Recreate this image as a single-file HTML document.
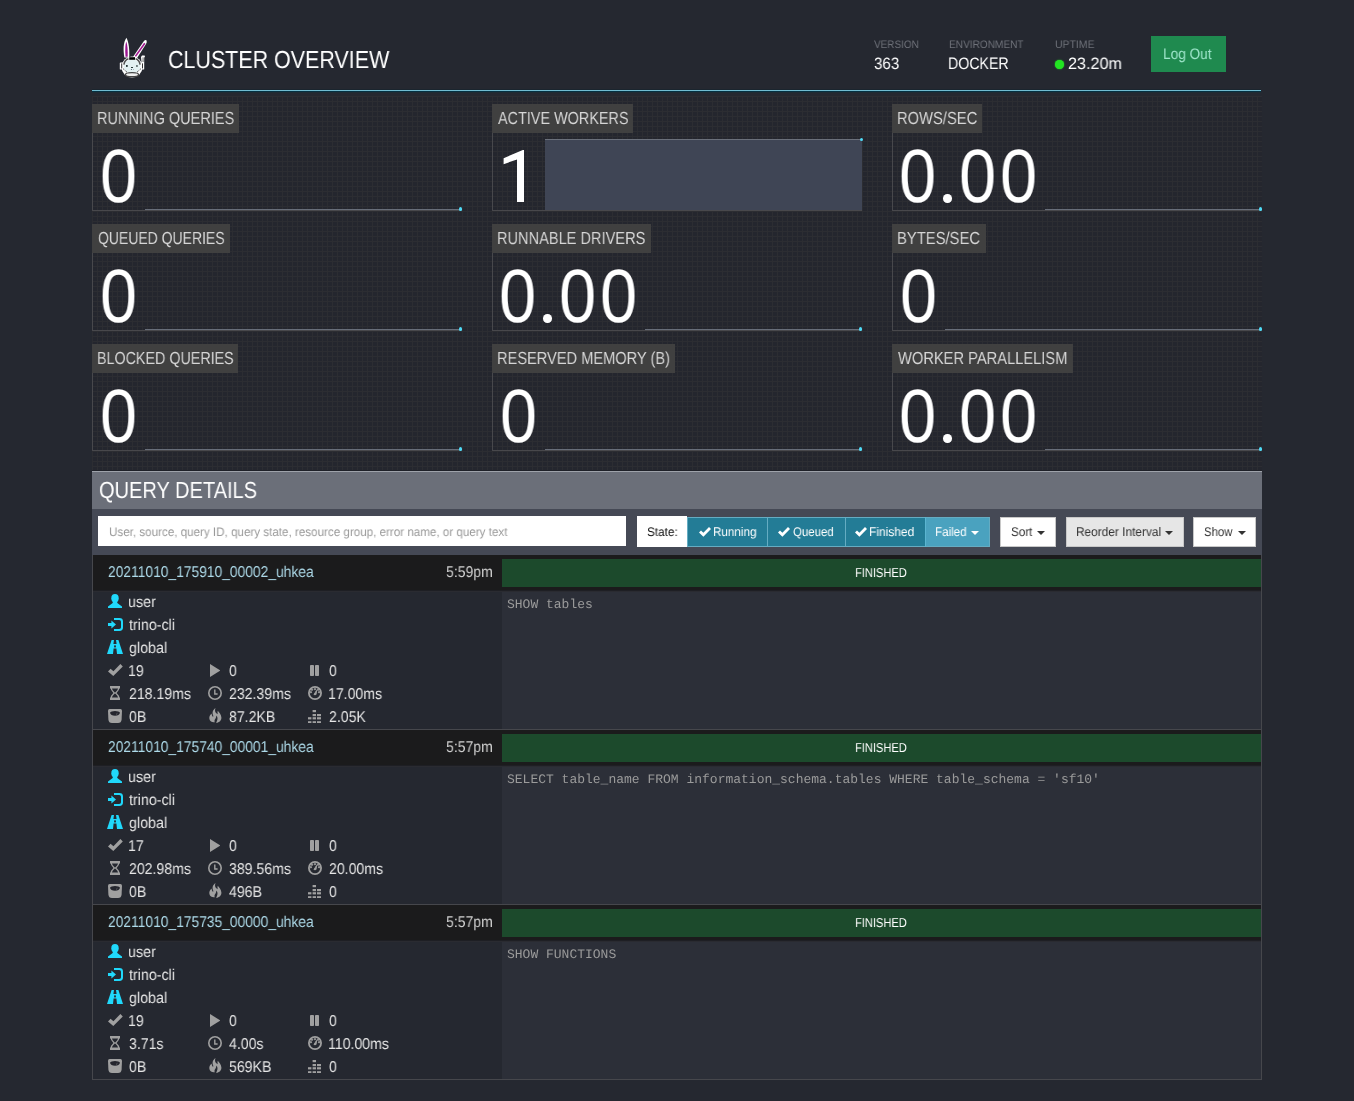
<!DOCTYPE html>
<html><head><meta charset="utf-8">
<style>
*{box-sizing:border-box;margin:0;padding:0}
html,body{width:1354px;height:1101px;overflow:hidden;background:#252830;font-family:"Liberation Sans",sans-serif;color:#fff}
.a{position:absolute}
.t{position:absolute;white-space:nowrap;transform-origin:0 0;will-change:transform;text-rendering:geometricPrecision}
</style></head><body>
<svg width="0" height="0" style="position:absolute"><defs>
<symbol id="i-user" viewBox="0 0 14 14"><ellipse cx="7" cy="4.2" rx="3.7" ry="4.2"/><path d="M5 8 H9 L9.6 9.2 L14 12.4 V14 H0 V12.4 L4.4 9.2 Z"/></symbol>
<symbol id="i-login" viewBox="0 0 15 13"><path d="M0 4.9 H3.4 V2.6 L8 6.5 L3.4 10.4 V8.1 H0 Z"/><path d="M6 0 H11.4 Q15 0 15 3.4 V9.6 Q15 13 11.4 13 H6 V11 H11.2 Q13 11 13 9.2 V3.8 Q13 2 11.2 2 H6 Z"/></symbol>
<symbol id="i-road" viewBox="0 0 16 14"><path d="M4.6 0 H7 L6.4 4 H9.6 L9 0 H11.4 L16 14 H10 L9.4 8.4 H6.6 L6 14 H0 Z"/><rect x="7.1" y="5.4" width="1.8" height="2" fill="#252830"/></symbol>
<symbol id="i-ok" viewBox="0 0 15 12"><path d="M0 7.4 L2.6 4.8 L5.4 7.2 L12.4 0 L14.8 2.4 L5.3 11.9 Z"/></symbol>
<symbol id="i-hour" viewBox="0 0 10 14"><rect x="0" y="0" width="10" height="2"/><rect x="0" y="12" width="10" height="2"/><path d="M1.3 2 C1.4 5 3.6 6 4.4 7 C3.6 8 1.4 9 1.3 12" fill="none" stroke-width="1.3"/><path d="M8.7 2 C8.6 5 6.4 6 5.6 7 C6.4 8 8.6 9 8.7 12" fill="none" stroke-width="1.3"/></symbol>
<symbol id="i-scale" viewBox="0 0 14 14"><path d="M1.6 0 H12.4 Q14 0 14 1.8 L13.6 10.5 Q13.3 14 10 14 H4 Q0.7 14 0.4 10.5 L0 1.8 Q0 0 1.6 0 Z"/><path d="M2 3.8 Q3 2 7 2 Q11 2 12 3.8 Q11.4 6.8 7 6.8 Q2.6 6.8 2 3.8 Z" fill="#23252d"/><path d="M8.3 5.6 L9.3 3.6 L9 5.6 Z" fill="#a0a0a0"/></symbol>
<symbol id="i-play" viewBox="0 0 10.4 13"><path d="M0 0 L10.4 6.5 L0 13 Z"/></symbol>
<symbol id="i-clock" viewBox="0 0 14 14"><circle cx="7" cy="7" r="6.2" fill="none" stroke-width="1.6"/><path d="M6.8 3.4 V8 H9.6" fill="none" stroke-width="1.4"/></symbol>
<symbol id="i-fire" viewBox="0 0 13 15"><path d="M6.6 0 C3.5 2 3 5 4.2 7.6 C4.6 8.4 4.2 9 3.6 8.4 C2.9 7.6 2.6 6.4 2.6 5.6 C0.8 7.2 0 9 0.4 11 C1 13.6 3.4 14.6 5.8 14.2 C5.4 13.2 5.4 12 6.2 11 C7 10 7.4 9 7.2 7.6 C8.6 8.8 8.8 10.6 8.2 12.2 C7.8 13.2 7.4 14 7.2 15 C10.4 14.4 12.6 12.2 12.4 9.4 C12.2 6.6 10.4 4.6 8.8 2.8 C8.4 4.2 8.4 5.4 9 6.2 C7.8 6 6.6 5 6.2 3.6 C5.9 2.4 6.1 1 6.6 0 Z"/></symbol>
<symbol id="i-pause" viewBox="0 0 9 11"><rect x="0" y="0" width="4" height="11" rx="0.8"/><rect x="5" y="0" width="4" height="11" rx="0.8"/></symbol>
<symbol id="i-dash" viewBox="0 0 14 14"><circle cx="7" cy="7" r="6.1" fill="none" stroke-width="1.8"/><circle cx="4" cy="3.7" r=".7"/><circle cx="7" cy="3.2" r=".7"/><circle cx="10" cy="3.7" r=".7"/><circle cx="2.9" cy="6.2" r=".7"/><circle cx="11.1" cy="6.2" r=".7"/><path d="M6 8.6 L8.6 4.4 L8 8.6 Z"/></symbol>
<symbol id="i-eq" viewBox="0 0 13 13.4"><rect x="4.6" y="0" width="3.4" height="2.2"/><rect x="4.6" y="4" width="3.4" height="2.2"/><rect x="9" y="4" width="4" height="2.2"/><rect x="0" y="7.2" width="3.4" height="2.2"/><rect x="4.6" y="7.2" width="3.4" height="2.2"/><rect x="9" y="7.2" width="4" height="2.2"/><rect x="0" y="11.2" width="3.4" height="2.2"/><rect x="4.6" y="11.2" width="3.4" height="2.2"/><rect x="9" y="11.2" width="4" height="2.2"/></symbol>
<symbol id="i-check" viewBox="0 0 12 10"><path d="M0 5.6 L2 3.6 L4.4 5.8 L10 0 L12 2 L4.4 9.8 Z"/></symbol>
</defs></svg>
<div class="a" style="left:92px;top:89px;width:1169px;height:1px;background:#1b252e;"></div>
<div class="a" style="left:92px;top:90px;width:1169px;height:1px;background:#70bcd1;"></div>
<div class="a" style="left:92px;top:91px;width:1169px;height:1px;background:#053041;"></div>
<div class="a" style="left:92px;top:92px;width:1169px;height:1px;background:#1f2b34;"></div>
<svg class="a" style="left:116px;top:36px" width="34" height="44" viewBox="116 36 34 44">
<path d="M124.4 57.5 C123 50 123.2 42.5 126.4 37.8 C128.8 42 129.6 50 129.2 57.5 Z" fill="#fff"/>
<path d="M125.5 56.8 C125 50 125.2 45 126.3 41.6 C127.4 45 127.9 50 127.7 56.8 Z" fill="#9b1490"/>
<path d="M132.6 57.4 L143.6 41.4 Q145.4 39.4 146.6 40.4 Q147.2 42 146 44 L136.8 58.4 Z" fill="#fff"/>
<path d="M135.4 56.4 L144.8 43.2" stroke="#a2168f" stroke-width="1.6" fill="none"/>
<rect x="119.8" y="62.4" width="3.8" height="7.2" rx=".6" fill="#fff"/>
<rect x="140.4" y="62.4" width="3.8" height="7.2" rx=".6" fill="#fff"/>
<path d="M141 57 L142 55.6 H144.6 L145 56.6 L144.2 57.8 V63 H141.6 Z" fill="#fff"/>
<circle cx="132" cy="67" r="10.5" fill="#fff"/>
<ellipse cx="132" cy="66.3" rx="8.4" ry="6.9" fill="#e3f1f2"/>
<path d="M123.9 64.6 Q124.4 60.4 128.4 58.8" stroke="#505050" stroke-width="1.5" fill="none"/>
<path d="M140.1 64.6 Q139.6 60.4 135.6 58.8" stroke="#505050" stroke-width="1.5" fill="none"/>
<rect x="129.2" y="57.2" width="5.8" height="2.6" fill="#000"/>
<rect x="121.2" y="63.4" width="1" height="5" fill="#333"/>
<rect x="142" y="63.4" width="1" height="5" fill="#333"/>
<rect x="142.6" y="57.4" width="0.9" height="4.6" fill="#555"/>
<path d="M123.2 68.8 L127.2 72.4" stroke="#333" stroke-width="1" stroke-dasharray="1.1 0.9" fill="none"/>
<path d="M140.8 68.8 L136.8 72.4" stroke="#333" stroke-width="1" stroke-dasharray="1.1 0.9" fill="none"/>
<ellipse cx="132" cy="74.7" rx="6.6" ry="2" fill="#f0f0f0" stroke="#444" stroke-width="1.3"/>
<rect x="126" y="65.1" width="1.7" height="1.7" fill="#122"/>
<rect x="136.4" y="65.1" width="1.1" height="1.8" fill="#122"/>
<rect x="131" y="67" width="2" height="0.9" fill="#122"/>
<circle cx="131.4" cy="69.4" r=".5" fill="#345"/><circle cx="133.5" cy="69.4" r=".45" fill="#567"/>
</svg>
<div class="a" style="left:1151px;top:36px;width:75px;height:36px;background:#1f8a4f;"></div>
<div class="a" style="left:1055px;top:60px;width:9px;height:9px;border-radius:50%;background:#22e422;box-shadow:0 0 1.5px #2f2"></div>
<div class="a" style="left:92px;top:96px;width:1170px;height:374px;background-color:#24262e;background-image:linear-gradient(to right,#2c2d32 1px,transparent 1px),linear-gradient(to bottom,#2c2d32 1px,transparent 1px);background-size:5px 5px;background-position:0 0"></div>
<div class="a" style="left:92px;top:470px;width:1170px;height:1px;background:#1e2027;"></div>
<div class="a" style="left:92px;top:104px;width:147px;height:29px;background:#404040;"></div>
<div class="a" style="left:92px;top:133px;width:1px;height:78px;background:#48484c;"></div>
<div class="a" style="left:92px;top:210px;width:370px;height:1px;background:#48484c;"></div>
<div class="a" style="left:145px;top:209px;width:316px;height:1px;background:#686e7a;"></div>
<div class="a" style="left:458.9px;top:207.4px;width:3.4px;height:3.4px;border-radius:50%;background:#4fdcf8"></div>
<div class="a" style="left:492px;top:104px;width:141px;height:29px;background:#404040;"></div>
<div class="a" style="left:492px;top:133px;width:1px;height:78px;background:#48484c;"></div>
<div class="a" style="left:492px;top:210px;width:370px;height:1px;background:#48484c;"></div>
<svg class="a" style="left:492px;top:104px" width="40" height="100"><path d="M32 46 L32 98 L25 98 L25 55.4 L11.6 60.2 L11.6 54.2 L30.8 46 Z" fill="#fff"/></svg>
<div class="a" style="left:545px;top:139px;width:317px;height:71px;background:#3f4555;border-top:1px solid #6b707b"></div>
<div class="a" style="left:859.5px;top:137.5px;width:3.4px;height:3.4px;border-radius:50%;background:#4fdcf8"></div>
<div class="a" style="left:892px;top:104px;width:90px;height:29px;background:#404040;"></div>
<div class="a" style="left:892px;top:133px;width:1px;height:78px;background:#48484c;"></div>
<div class="a" style="left:892px;top:210px;width:370px;height:1px;background:#48484c;"></div>
<div class="a" style="left:943.2px;top:194.2px;width:8.6px;height:8.6px;border-radius:50%;background:#fff"></div>
<div class="a" style="left:1045px;top:209px;width:216px;height:1px;background:#686e7a;"></div>
<div class="a" style="left:1258.9px;top:207.4px;width:3.4px;height:3.4px;border-radius:50%;background:#4fdcf8"></div>
<div class="a" style="left:92px;top:224px;width:138px;height:29px;background:#404040;"></div>
<div class="a" style="left:92px;top:253px;width:1px;height:78px;background:#48484c;"></div>
<div class="a" style="left:92px;top:330px;width:370px;height:1px;background:#48484c;"></div>
<div class="a" style="left:145px;top:329px;width:316px;height:1px;background:#686e7a;"></div>
<div class="a" style="left:458.9px;top:327.4px;width:3.4px;height:3.4px;border-radius:50%;background:#4fdcf8"></div>
<div class="a" style="left:492px;top:224px;width:159px;height:29px;background:#404040;"></div>
<div class="a" style="left:492px;top:253px;width:1px;height:78px;background:#48484c;"></div>
<div class="a" style="left:492px;top:330px;width:370px;height:1px;background:#48484c;"></div>
<div class="a" style="left:543.2px;top:314.2px;width:8.6px;height:8.6px;border-radius:50%;background:#fff"></div>
<div class="a" style="left:645px;top:329px;width:216px;height:1px;background:#686e7a;"></div>
<div class="a" style="left:858.9px;top:327.4px;width:3.4px;height:3.4px;border-radius:50%;background:#4fdcf8"></div>
<div class="a" style="left:892px;top:224px;width:94px;height:29px;background:#404040;"></div>
<div class="a" style="left:892px;top:253px;width:1px;height:78px;background:#48484c;"></div>
<div class="a" style="left:892px;top:330px;width:370px;height:1px;background:#48484c;"></div>
<div class="a" style="left:945px;top:329px;width:316px;height:1px;background:#686e7a;"></div>
<div class="a" style="left:1258.9px;top:327.4px;width:3.4px;height:3.4px;border-radius:50%;background:#4fdcf8"></div>
<div class="a" style="left:92px;top:344px;width:146px;height:29px;background:#404040;"></div>
<div class="a" style="left:92px;top:373px;width:1px;height:78px;background:#48484c;"></div>
<div class="a" style="left:92px;top:450px;width:370px;height:1px;background:#48484c;"></div>
<div class="a" style="left:145px;top:449px;width:316px;height:1px;background:#686e7a;"></div>
<div class="a" style="left:458.9px;top:447.4px;width:3.4px;height:3.4px;border-radius:50%;background:#4fdcf8"></div>
<div class="a" style="left:492px;top:344px;width:183px;height:29px;background:#404040;"></div>
<div class="a" style="left:492px;top:373px;width:1px;height:78px;background:#48484c;"></div>
<div class="a" style="left:492px;top:450px;width:370px;height:1px;background:#48484c;"></div>
<div class="a" style="left:545px;top:449px;width:316px;height:1px;background:#686e7a;"></div>
<div class="a" style="left:858.9px;top:447.4px;width:3.4px;height:3.4px;border-radius:50%;background:#4fdcf8"></div>
<div class="a" style="left:892px;top:344px;width:181px;height:29px;background:#404040;"></div>
<div class="a" style="left:892px;top:373px;width:1px;height:78px;background:#48484c;"></div>
<div class="a" style="left:892px;top:450px;width:370px;height:1px;background:#48484c;"></div>
<div class="a" style="left:943.2px;top:434.2px;width:8.6px;height:8.6px;border-radius:50%;background:#fff"></div>
<div class="a" style="left:1045px;top:449px;width:216px;height:1px;background:#686e7a;"></div>
<div class="a" style="left:1258.9px;top:447.4px;width:3.4px;height:3.4px;border-radius:50%;background:#4fdcf8"></div>
<div class="a" style="left:92px;top:471px;width:1170px;height:1px;background:#9ea2aa;"></div>
<div class="a" style="left:92px;top:472px;width:1170px;height:37px;background:#6b6f79;"></div>
<div class="a" style="left:92px;top:509px;width:1170px;height:46px;background:#454955;"></div>
<div class="a" style="left:98px;top:516px;width:528px;height:30px;background:#ffffff;"></div>
<div class="a" style="left:637px;top:516px;width:50px;height:31px;background:#ffffff;"></div>
<div class="a" style="left:687px;top:517px;width:303px;height:30px;background:#65acc2;"></div>
<div class="a" style="left:688px;top:518px;width:79px;height:28px;background:#237c96;"></div>
<div class="a" style="left:768px;top:518px;width:77px;height:28px;background:#237c96;"></div>
<div class="a" style="left:846px;top:518px;width:79px;height:28px;background:#237c96;"></div>
<div class="a" style="left:925px;top:517px;width:1px;height:30px;background:#5bb5d0;"></div>
<div class="a" style="left:926px;top:518px;width:63px;height:28px;background:#4aa2bf;"></div>
<svg class="a" style="left:699px;top:526.5px;fill:#fff;" width="12" height="10"><use href="#i-check"/></svg>
<svg class="a" style="left:777.7px;top:526.5px;fill:#fff;" width="12" height="10"><use href="#i-check"/></svg>
<svg class="a" style="left:855px;top:526.5px;fill:#fff;" width="12" height="10"><use href="#i-check"/></svg>
<div class="a" style="left:971px;top:531px;width:0;height:0;border-left:4px solid transparent;border-right:4px solid transparent;border-top:4px solid #fff"></div>
<div class="a" style="left:1000px;top:517px;width:56px;height:30px;background:#ffffff;border:1px solid #c8c8c8"></div>
<div class="a" style="left:1037px;top:531px;width:0;height:0;border-left:4px solid transparent;border-right:4px solid transparent;border-top:4px solid #333"></div>
<div class="a" style="left:1066px;top:517px;width:118px;height:30px;background:#e6e6e6;border:1px solid #c8c8c8"></div>
<div class="a" style="left:1165px;top:531px;width:0;height:0;border-left:4px solid transparent;border-right:4px solid transparent;border-top:4px solid #333"></div>
<div class="a" style="left:1193px;top:517px;width:63px;height:30px;background:#ffffff;border:1px solid #c8c8c8"></div>
<div class="a" style="left:1238px;top:531px;width:0;height:0;border-left:4px solid transparent;border-right:4px solid transparent;border-top:4px solid #333"></div>
<div class="a" style="left:92px;top:555px;width:1px;height:525px;background:#46474c;"></div>
<div class="a" style="left:1261px;top:555px;width:1px;height:525px;background:#46474c;"></div>
<div class="a" style="left:93px;top:555px;width:1168px;height:35px;background:#1b1b1c;"></div>
<div class="a" style="left:502px;top:559px;width:759px;height:28px;background:#1c4a2c;"></div>
<div class="a" style="left:502px;top:590px;width:759px;height:139px;background:#2c2f38;"></div>
<div class="a" style="left:93px;top:590px;width:1168px;height:1px;background:#1e1f24;"></div>
<div class="a" style="left:93px;top:591px;width:1168px;height:1px;background:#2a2b31;"></div>
<div class="a" style="left:92px;top:729px;width:1170px;height:1px;background:#46474c;"></div>
<svg class="a" style="left:108px;top:594px;fill:#20d8fb;" width="14" height="14"><use href="#i-user"/></svg>
<svg class="a" style="left:108px;top:618px;fill:#20d8fb;" width="15" height="13"><use href="#i-login"/></svg>
<svg class="a" style="left:107px;top:640px;fill:#20d8fb;" width="16" height="14"><use href="#i-road"/></svg>
<svg class="a" style="left:108px;top:664.4px;fill:#a0a0a0;" width="15" height="12"><use href="#i-ok"/></svg>
<svg class="a" style="left:210px;top:664px;fill:#a0a0a0;" width="10.4" height="13"><use href="#i-play"/></svg>
<svg class="a" style="left:310px;top:665px;fill:#a0a0a0;" width="9" height="11"><use href="#i-pause"/></svg>
<svg class="a" style="left:110px;top:686px;fill:#a0a0a0;stroke:#a0a0a0;" width="10" height="14"><use href="#i-hour"/></svg>
<svg class="a" style="left:208px;top:686px;fill:#a0a0a0;stroke:#a0a0a0;" width="14" height="14"><use href="#i-clock"/></svg>
<svg class="a" style="left:308px;top:686px;fill:#a0a0a0;stroke:#a0a0a0;" width="14" height="14"><use href="#i-dash"/></svg>
<svg class="a" style="left:108px;top:709px;fill:#a0a0a0;" width="14" height="14"><use href="#i-scale"/></svg>
<svg class="a" style="left:209px;top:708px;fill:#a0a0a0;" width="13" height="15"><use href="#i-fire"/></svg>
<svg class="a" style="left:308px;top:709.8px;fill:#a0a0a0;" width="13" height="13.4"><use href="#i-eq"/></svg>
<div class="a" style="left:93px;top:730px;width:1168px;height:35px;background:#1b1b1c;"></div>
<div class="a" style="left:502px;top:734px;width:759px;height:28px;background:#1c4a2c;"></div>
<div class="a" style="left:502px;top:765px;width:759px;height:139px;background:#2c2f38;"></div>
<div class="a" style="left:93px;top:765px;width:1168px;height:1px;background:#1e1f24;"></div>
<div class="a" style="left:93px;top:766px;width:1168px;height:1px;background:#2a2b31;"></div>
<div class="a" style="left:92px;top:904px;width:1170px;height:1px;background:#46474c;"></div>
<svg class="a" style="left:108px;top:769px;fill:#20d8fb;" width="14" height="14"><use href="#i-user"/></svg>
<svg class="a" style="left:108px;top:793px;fill:#20d8fb;" width="15" height="13"><use href="#i-login"/></svg>
<svg class="a" style="left:107px;top:815px;fill:#20d8fb;" width="16" height="14"><use href="#i-road"/></svg>
<svg class="a" style="left:108px;top:839.4px;fill:#a0a0a0;" width="15" height="12"><use href="#i-ok"/></svg>
<svg class="a" style="left:210px;top:839px;fill:#a0a0a0;" width="10.4" height="13"><use href="#i-play"/></svg>
<svg class="a" style="left:310px;top:840px;fill:#a0a0a0;" width="9" height="11"><use href="#i-pause"/></svg>
<svg class="a" style="left:110px;top:861px;fill:#a0a0a0;stroke:#a0a0a0;" width="10" height="14"><use href="#i-hour"/></svg>
<svg class="a" style="left:208px;top:861px;fill:#a0a0a0;stroke:#a0a0a0;" width="14" height="14"><use href="#i-clock"/></svg>
<svg class="a" style="left:308px;top:861px;fill:#a0a0a0;stroke:#a0a0a0;" width="14" height="14"><use href="#i-dash"/></svg>
<svg class="a" style="left:108px;top:884px;fill:#a0a0a0;" width="14" height="14"><use href="#i-scale"/></svg>
<svg class="a" style="left:209px;top:883px;fill:#a0a0a0;" width="13" height="15"><use href="#i-fire"/></svg>
<svg class="a" style="left:308px;top:884.8px;fill:#a0a0a0;" width="13" height="13.4"><use href="#i-eq"/></svg>
<div class="a" style="left:93px;top:905px;width:1168px;height:35px;background:#1b1b1c;"></div>
<div class="a" style="left:502px;top:909px;width:759px;height:28px;background:#1c4a2c;"></div>
<div class="a" style="left:502px;top:940px;width:759px;height:139px;background:#2c2f38;"></div>
<div class="a" style="left:93px;top:940px;width:1168px;height:1px;background:#1e1f24;"></div>
<div class="a" style="left:93px;top:941px;width:1168px;height:1px;background:#2a2b31;"></div>
<div class="a" style="left:92px;top:1079px;width:1170px;height:1px;background:#46474c;"></div>
<svg class="a" style="left:108px;top:944px;fill:#20d8fb;" width="14" height="14"><use href="#i-user"/></svg>
<svg class="a" style="left:108px;top:968px;fill:#20d8fb;" width="15" height="13"><use href="#i-login"/></svg>
<svg class="a" style="left:107px;top:990px;fill:#20d8fb;" width="16" height="14"><use href="#i-road"/></svg>
<svg class="a" style="left:108px;top:1014.4px;fill:#a0a0a0;" width="15" height="12"><use href="#i-ok"/></svg>
<svg class="a" style="left:210px;top:1014px;fill:#a0a0a0;" width="10.4" height="13"><use href="#i-play"/></svg>
<svg class="a" style="left:310px;top:1015px;fill:#a0a0a0;" width="9" height="11"><use href="#i-pause"/></svg>
<svg class="a" style="left:110px;top:1036px;fill:#a0a0a0;stroke:#a0a0a0;" width="10" height="14"><use href="#i-hour"/></svg>
<svg class="a" style="left:208px;top:1036px;fill:#a0a0a0;stroke:#a0a0a0;" width="14" height="14"><use href="#i-clock"/></svg>
<svg class="a" style="left:308px;top:1036px;fill:#a0a0a0;stroke:#a0a0a0;" width="14" height="14"><use href="#i-dash"/></svg>
<svg class="a" style="left:108px;top:1059px;fill:#a0a0a0;" width="14" height="14"><use href="#i-scale"/></svg>
<svg class="a" style="left:209px;top:1058px;fill:#a0a0a0;" width="13" height="15"><use href="#i-fire"/></svg>
<svg class="a" style="left:308px;top:1059.8px;fill:#a0a0a0;" width="13" height="13.4"><use href="#i-eq"/></svg>
<div class="t" style="left:168.13px;top:46px;font-size:24.7px;line-height:30px;color:#ffffff;transform:scaleX(0.8687)">CLUSTER OVERVIEW</div>
<div class="t" style="left:873.80px;top:39px;font-size:10.9px;line-height:13px;color:#6f727a;transform:scaleX(0.9117)">VERSION</div>
<div class="t" style="left:873.80px;top:54px;font-size:16.4px;line-height:20px;color:#ffffff;transform:scaleX(0.9254)">363</div>
<div class="t" style="left:948.90px;top:39px;font-size:10.9px;line-height:13px;color:#6f727a;transform:scaleX(0.9267)">ENVIRONMENT</div>
<div class="t" style="left:948.05px;top:54px;font-size:16.6px;line-height:20px;color:#ffffff;transform:scaleX(0.8542)">DOCKER</div>
<div class="t" style="left:1054.80px;top:39px;font-size:10.9px;line-height:13px;color:#6f727a;transform:scaleX(0.9589)">UPTIME</div>
<div class="t" style="left:1067.50px;top:54px;font-size:16.4px;line-height:20px;color:#ffffff;transform:scaleX(0.9867)">23.20m</div>
<div class="t" style="left:1163.40px;top:46px;font-size:15.2px;line-height:18px;color:#9fe6cb;transform:scaleX(0.8993)">Log Out</div>
<div class="t" style="left:96.86px;top:108px;font-size:17.4px;line-height:21px;color:#d6d6d6;transform:scaleX(0.8355)">RUNNING QUERIES</div>
<div class="t" style="left:99.74px;top:131px;font-size:75.5px;line-height:91px;color:#ffffff;transform:scaleX(0.8816)">0</div>
<div class="t" style="left:497.70px;top:108px;font-size:17.4px;line-height:21px;color:#d6d6d6;transform:scaleX(0.8285)">ACTIVE WORKERS</div>
<div class="t" style="left:896.85px;top:108px;font-size:17.4px;line-height:21px;color:#d6d6d6;transform:scaleX(0.8472)">ROWS/SEC</div>
<div class="t" style="left:899.43px;top:131px;font-size:75.5px;line-height:91px;color:#ffffff;transform:scaleX(0.8842)">0</div>
<div class="t" style="left:959.13px;top:131px;font-size:75.5px;line-height:91px;color:#ffffff;transform:scaleX(0.8842)">0</div>
<div class="t" style="left:999.93px;top:131px;font-size:75.5px;line-height:91px;color:#ffffff;transform:scaleX(0.8842)">0</div>
<div class="t" style="left:97.70px;top:228px;font-size:17.4px;line-height:21px;color:#d6d6d6;transform:scaleX(0.8036)">QUEUED QUERIES</div>
<div class="t" style="left:99.74px;top:251px;font-size:75.5px;line-height:91px;color:#ffffff;transform:scaleX(0.8816)">0</div>
<div class="t" style="left:496.86px;top:228px;font-size:17.4px;line-height:21px;color:#d6d6d6;transform:scaleX(0.8388)">RUNNABLE DRIVERS</div>
<div class="t" style="left:499.43px;top:251px;font-size:75.5px;line-height:91px;color:#ffffff;transform:scaleX(0.8842)">0</div>
<div class="t" style="left:559.13px;top:251px;font-size:75.5px;line-height:91px;color:#ffffff;transform:scaleX(0.8842)">0</div>
<div class="t" style="left:599.93px;top:251px;font-size:75.5px;line-height:91px;color:#ffffff;transform:scaleX(0.8842)">0</div>
<div class="t" style="left:896.85px;top:228px;font-size:17.4px;line-height:21px;color:#d6d6d6;transform:scaleX(0.8506)">BYTES/SEC</div>
<div class="t" style="left:899.74px;top:251px;font-size:75.5px;line-height:91px;color:#ffffff;transform:scaleX(0.8816)">0</div>
<div class="t" style="left:96.88px;top:348px;font-size:17.4px;line-height:21px;color:#d6d6d6;transform:scaleX(0.8225)">BLOCKED QUERIES</div>
<div class="t" style="left:99.74px;top:371px;font-size:75.5px;line-height:91px;color:#ffffff;transform:scaleX(0.8816)">0</div>
<div class="t" style="left:496.86px;top:348px;font-size:17.4px;line-height:21px;color:#d6d6d6;transform:scaleX(0.8402)">RESERVED MEMORY (B)</div>
<div class="t" style="left:499.74px;top:371px;font-size:75.5px;line-height:91px;color:#ffffff;transform:scaleX(0.8816)">0</div>
<div class="t" style="left:897.70px;top:348px;font-size:17.4px;line-height:21px;color:#d6d6d6;transform:scaleX(0.8442)">WORKER PARALLELISM</div>
<div class="t" style="left:899.43px;top:371px;font-size:75.5px;line-height:91px;color:#ffffff;transform:scaleX(0.8842)">0</div>
<div class="t" style="left:959.13px;top:371px;font-size:75.5px;line-height:91px;color:#ffffff;transform:scaleX(0.8842)">0</div>
<div class="t" style="left:999.93px;top:371px;font-size:75.5px;line-height:91px;color:#ffffff;transform:scaleX(0.8842)">0</div>
<div class="t" style="left:98.84px;top:476px;font-size:23.2px;line-height:28px;color:#ffffff;transform:scaleX(0.8640)">QUERY DETAILS</div>
<div class="t" style="left:109.40px;top:525px;font-size:12.4px;line-height:15px;color:#9a9a9a;transform:scaleX(0.9376)">User, source, query ID, query state, resource group, error name, or query text</div>
<div class="t" style="left:647.00px;top:525px;font-size:12.4px;line-height:15px;color:#111111;transform:scaleX(0.9489)">State:</div>
<div class="t" style="left:713.07px;top:525px;font-size:12.6px;line-height:15px;color:#ffffff;transform:scaleX(0.9257)">Running</div>
<div class="t" style="left:792.80px;top:525px;font-size:12.6px;line-height:15px;color:#ffffff;transform:scaleX(0.9105)">Queued</div>
<div class="t" style="left:868.95px;top:525px;font-size:12.6px;line-height:15px;color:#ffffff;transform:scaleX(0.9528)">Finished</div>
<div class="t" style="left:935.48px;top:525px;font-size:12.6px;line-height:15px;color:#ffffff;transform:scaleX(0.9220)">Failed</div>
<div class="t" style="left:1011.00px;top:525px;font-size:12.6px;line-height:15px;color:#333333;transform:scaleX(0.9238)">Sort</div>
<div class="t" style="left:1076.26px;top:525px;font-size:12.6px;line-height:15px;color:#333333;transform:scaleX(0.9424)">Reorder Interval</div>
<div class="t" style="left:1203.90px;top:525px;font-size:12.6px;line-height:15px;color:#333333;transform:scaleX(0.8979)">Show</div>
<div class="t" style="left:108.40px;top:563px;font-size:15.6px;line-height:19px;color:#aedbea;transform:scaleX(0.8860)">20211010_175910_00002_uhkea</div>
<div class="t" style="left:445.78px;top:563px;font-size:15.6px;line-height:19px;color:#cfcfcf;transform:scaleX(0.9000)">5:59pm</div>
<div class="t" style="left:855.44px;top:565px;font-size:12.9px;line-height:15px;color:#ffffff;transform:scaleX(0.8615)">FINISHED</div>
<div class="t" style="left:507.40px;top:597px;font-size:13px;line-height:16px;color:#9b9b9b;font-family:'Liberation Mono'">SHOW tables</div>
<div class="t" style="left:128.19px;top:593px;font-size:15.6px;line-height:19px;color:#e6e6e6;transform:scaleX(0.9150)">user</div>
<div class="t" style="left:129.10px;top:616px;font-size:15.6px;line-height:19px;color:#e6e6e6;transform:scaleX(0.9150)">trino-cli</div>
<div class="t" style="left:129.10px;top:639px;font-size:15.6px;line-height:19px;color:#e6e6e6;transform:scaleX(0.9150)">global</div>
<div class="t" style="left:128.09px;top:662px;font-size:15.6px;line-height:19px;color:#e6e6e6;transform:scaleX(0.9050)">19</div>
<div class="t" style="left:229.00px;top:662px;font-size:15.6px;line-height:19px;color:#e6e6e6;transform:scaleX(0.9050)">0</div>
<div class="t" style="left:329.00px;top:662px;font-size:15.6px;line-height:19px;color:#e6e6e6;transform:scaleX(0.9050)">0</div>
<div class="t" style="left:129.00px;top:685px;font-size:15.6px;line-height:19px;color:#e6e6e6;transform:scaleX(0.9050)">218.19ms</div>
<div class="t" style="left:229.00px;top:685px;font-size:15.6px;line-height:19px;color:#e6e6e6;transform:scaleX(0.9050)">232.39ms</div>
<div class="t" style="left:328.10px;top:685px;font-size:15.6px;line-height:19px;color:#e6e6e6;transform:scaleX(0.9050)">17.00ms</div>
<div class="t" style="left:129.00px;top:708px;font-size:15.6px;line-height:19px;color:#e6e6e6;transform:scaleX(0.9050)">0B</div>
<div class="t" style="left:229.00px;top:708px;font-size:15.6px;line-height:19px;color:#e6e6e6;transform:scaleX(0.9050)">87.2KB</div>
<div class="t" style="left:329.00px;top:708px;font-size:15.6px;line-height:19px;color:#e6e6e6;transform:scaleX(0.9050)">2.05K</div>
<div class="t" style="left:108.40px;top:738px;font-size:15.6px;line-height:19px;color:#aedbea;transform:scaleX(0.8860)">20211010_175740_00001_uhkea</div>
<div class="t" style="left:445.78px;top:738px;font-size:15.6px;line-height:19px;color:#cfcfcf;transform:scaleX(0.9000)">5:57pm</div>
<div class="t" style="left:855.44px;top:740px;font-size:12.9px;line-height:15px;color:#ffffff;transform:scaleX(0.8615)">FINISHED</div>
<div class="t" style="left:507.40px;top:772px;font-size:13px;line-height:16px;color:#9b9b9b;font-family:'Liberation Mono'">SELECT table_name FROM information_schema.tables WHERE table_schema = 'sf10'</div>
<div class="t" style="left:128.19px;top:768px;font-size:15.6px;line-height:19px;color:#e6e6e6;transform:scaleX(0.9150)">user</div>
<div class="t" style="left:129.10px;top:791px;font-size:15.6px;line-height:19px;color:#e6e6e6;transform:scaleX(0.9150)">trino-cli</div>
<div class="t" style="left:129.10px;top:814px;font-size:15.6px;line-height:19px;color:#e6e6e6;transform:scaleX(0.9150)">global</div>
<div class="t" style="left:128.09px;top:837px;font-size:15.6px;line-height:19px;color:#e6e6e6;transform:scaleX(0.9050)">17</div>
<div class="t" style="left:229.00px;top:837px;font-size:15.6px;line-height:19px;color:#e6e6e6;transform:scaleX(0.9050)">0</div>
<div class="t" style="left:329.00px;top:837px;font-size:15.6px;line-height:19px;color:#e6e6e6;transform:scaleX(0.9050)">0</div>
<div class="t" style="left:129.00px;top:860px;font-size:15.6px;line-height:19px;color:#e6e6e6;transform:scaleX(0.9050)">202.98ms</div>
<div class="t" style="left:229.00px;top:860px;font-size:15.6px;line-height:19px;color:#e6e6e6;transform:scaleX(0.9050)">389.56ms</div>
<div class="t" style="left:329.00px;top:860px;font-size:15.6px;line-height:19px;color:#e6e6e6;transform:scaleX(0.9050)">20.00ms</div>
<div class="t" style="left:129.00px;top:883px;font-size:15.6px;line-height:19px;color:#e6e6e6;transform:scaleX(0.9050)">0B</div>
<div class="t" style="left:229.00px;top:883px;font-size:15.6px;line-height:19px;color:#e6e6e6;transform:scaleX(0.9050)">496B</div>
<div class="t" style="left:329.00px;top:883px;font-size:15.6px;line-height:19px;color:#e6e6e6;transform:scaleX(0.9050)">0</div>
<div class="t" style="left:108.40px;top:913px;font-size:15.6px;line-height:19px;color:#aedbea;transform:scaleX(0.8860)">20211010_175735_00000_uhkea</div>
<div class="t" style="left:445.78px;top:913px;font-size:15.6px;line-height:19px;color:#cfcfcf;transform:scaleX(0.9000)">5:57pm</div>
<div class="t" style="left:855.44px;top:915px;font-size:12.9px;line-height:15px;color:#ffffff;transform:scaleX(0.8615)">FINISHED</div>
<div class="t" style="left:507.40px;top:947px;font-size:13px;line-height:16px;color:#9b9b9b;font-family:'Liberation Mono'">SHOW FUNCTIONS</div>
<div class="t" style="left:128.19px;top:943px;font-size:15.6px;line-height:19px;color:#e6e6e6;transform:scaleX(0.9150)">user</div>
<div class="t" style="left:129.10px;top:966px;font-size:15.6px;line-height:19px;color:#e6e6e6;transform:scaleX(0.9150)">trino-cli</div>
<div class="t" style="left:129.10px;top:989px;font-size:15.6px;line-height:19px;color:#e6e6e6;transform:scaleX(0.9150)">global</div>
<div class="t" style="left:128.09px;top:1012px;font-size:15.6px;line-height:19px;color:#e6e6e6;transform:scaleX(0.9050)">19</div>
<div class="t" style="left:229.00px;top:1012px;font-size:15.6px;line-height:19px;color:#e6e6e6;transform:scaleX(0.9050)">0</div>
<div class="t" style="left:329.00px;top:1012px;font-size:15.6px;line-height:19px;color:#e6e6e6;transform:scaleX(0.9050)">0</div>
<div class="t" style="left:129.00px;top:1035px;font-size:15.6px;line-height:19px;color:#e6e6e6;transform:scaleX(0.9050)">3.71s</div>
<div class="t" style="left:229.00px;top:1035px;font-size:15.6px;line-height:19px;color:#e6e6e6;transform:scaleX(0.9050)">4.00s</div>
<div class="t" style="left:328.10px;top:1035px;font-size:15.6px;line-height:19px;color:#e6e6e6;transform:scaleX(0.9050)">110.00ms</div>
<div class="t" style="left:129.00px;top:1058px;font-size:15.6px;line-height:19px;color:#e6e6e6;transform:scaleX(0.9050)">0B</div>
<div class="t" style="left:229.00px;top:1058px;font-size:15.6px;line-height:19px;color:#e6e6e6;transform:scaleX(0.9050)">569KB</div>
<div class="t" style="left:329.00px;top:1058px;font-size:15.6px;line-height:19px;color:#e6e6e6;transform:scaleX(0.9050)">0</div>
</body></html>
